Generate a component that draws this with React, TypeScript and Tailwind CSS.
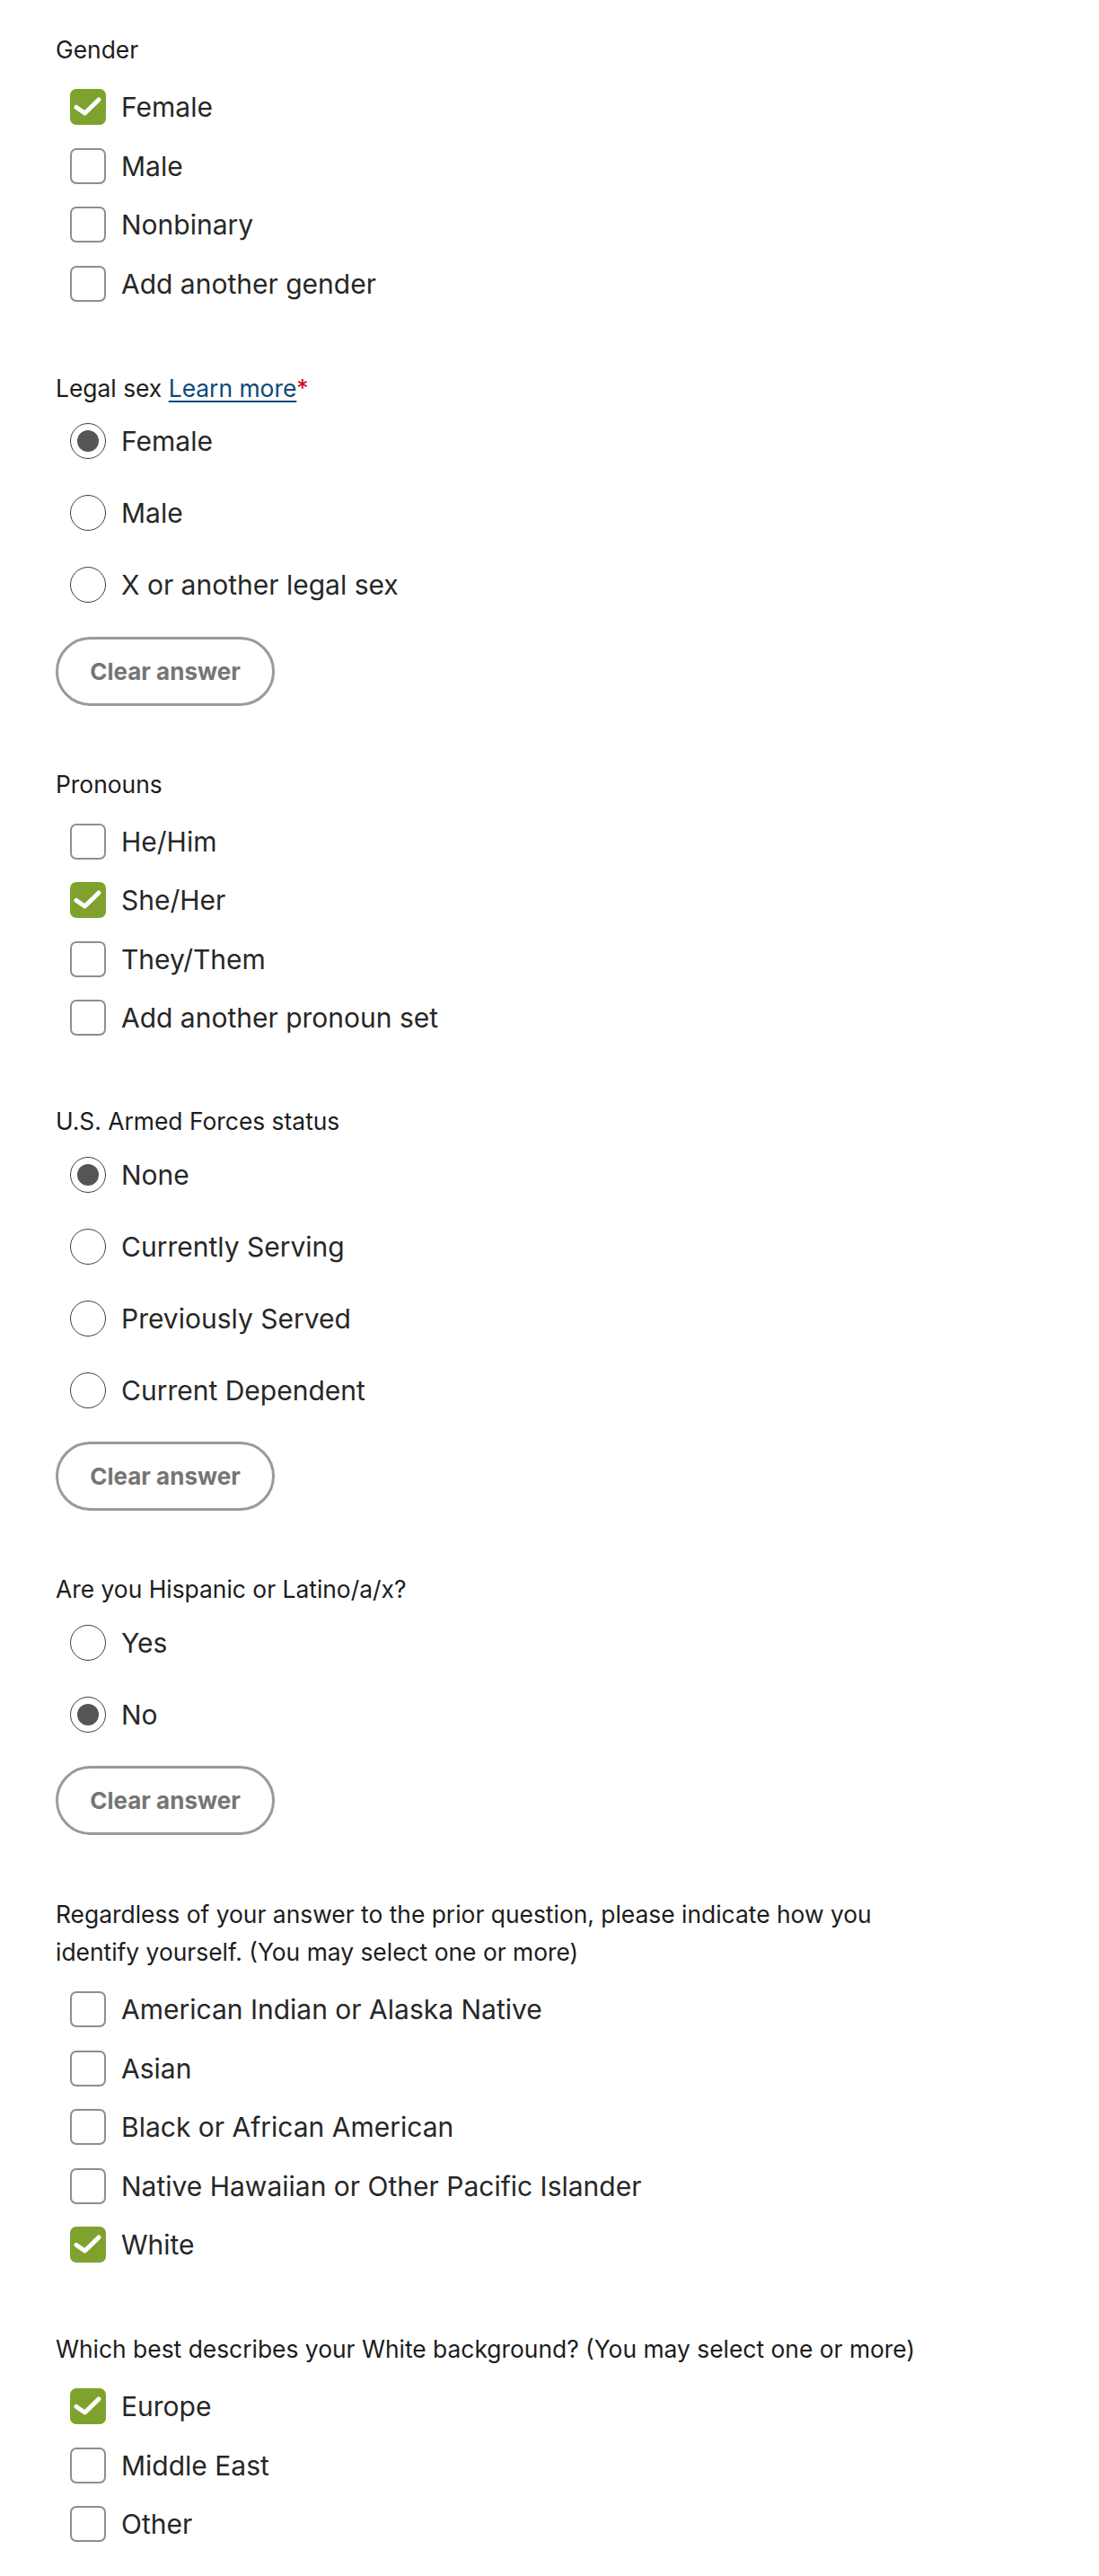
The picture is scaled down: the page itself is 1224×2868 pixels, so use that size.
import React from 'react';

type Opt = { label: string; checked?: boolean };

const font = { fontFamily: 'Inter, "Noto Sans", sans-serif' };

const CheckIcon: React.FC = () => (
  <svg className="h-[40px] w-[40px]" viewBox="0 0 40 40" fill="none">
    <path d="M7 20.5l9.5 6.5L32 12" stroke="#fff" strokeWidth={5} strokeLinecap="round" strokeLinejoin="round" />
  </svg>
);

const CheckRow: React.FC<Opt> = ({ label, checked }) => (
  <label className="flex h-[40px] items-center">
    {checked ? (
      <span className="flex h-[40px] w-[40px] shrink-0 items-center justify-center rounded-[7px] bg-[#7fa22e]">
        <CheckIcon />
      </span>
    ) : (
      <span className="h-[40px] w-[40px] shrink-0 rounded-[7px] border-2 border-[#8e8e8e] bg-white" />
    )}
    <span className="ml-[17px] text-[30px] leading-[40px] text-[#272727]">{label}</span>
  </label>
);

const RadioRow: React.FC<Opt> = ({ label, checked }) => (
  <label className="flex h-[40px] items-center">
    <span className="flex h-[40px] w-[40px] shrink-0 items-center justify-center rounded-full border-[1.5px] border-[#3f3f3f] bg-white">
      {checked && <span className="h-[24px] w-[24px] rounded-full bg-[#555555]" />}
    </span>
    <span className="ml-[17px] text-[30px] leading-[40px] text-[#272727]">{label}</span>
  </label>
);

const Label: React.FC<{ children: React.ReactNode; className?: string }> = ({ children, className }) => (
  <div className={`text-[26.4px] leading-[42px] text-[#1c1c1c] ${className ?? ''}`}>{children}</div>
);

const CheckGroup: React.FC<{ options: Opt[] }> = ({ options }) => (
  <div className="mt-[23px] flex flex-col gap-[25.5px] pl-[16px]">
    {options.map((o) => (
      <CheckRow key={o.label} {...o} />
    ))}
  </div>
);

const RadioGroup: React.FC<{ options: Opt[] }> = ({ options }) => (
  <div className="mt-[18.5px] flex flex-col gap-[40px] pl-[16px]">
    {options.map((o) => (
      <RadioRow key={o.label} {...o} />
    ))}
  </div>
);

const ClearButton: React.FC = () => (
  <button
    type="button"
    className="mt-[37.5px] flex h-[77px] w-[244px] items-center justify-center rounded-full border-[3px] border-[#9a9a9a] bg-white text-[26px] font-bold text-[#757575]"
  >
    Clear answer
  </button>
);

export default function App() {
  return (
    <div className="min-h-screen bg-white px-[62px] pt-[34px] pb-[40px]" style={font}>
      {/* Gender */}
      <Label>Gender</Label>
      <CheckGroup
        options={[
          { label: 'Female', checked: true },
          { label: 'Male' },
          { label: 'Nonbinary' },
          { label: 'Add another gender' },
        ]}
      />

      {/* Legal sex */}
      <Label className="mt-[75px]">
        Legal sex{' '}
        <a href="#" className="text-[#0b4a7a] underline decoration-[1.5px] underline-offset-[4px]">
          Learn more
        </a>
        <span className="text-[#d0021b]">*</span>
      </Label>
      <RadioGroup
        options={[{ label: 'Female', checked: true }, { label: 'Male' }, { label: 'X or another legal sex' }]}
      />
      <ClearButton />

      {/* Pronouns */}
      <Label className="mt-[66px]">Pronouns</Label>
      <CheckGroup
        options={[
          { label: 'He/Him' },
          { label: 'She/Her', checked: true },
          { label: 'They/Them' },
          { label: 'Add another pronoun set' },
        ]}
      />

      {/* Armed forces */}
      <Label className="mt-[74px]">U.S. Armed Forces status</Label>
      <RadioGroup
        options={[
          { label: 'None', checked: true },
          { label: 'Currently Serving' },
          { label: 'Previously Served' },
          { label: 'Current Dependent' },
        ]}
      />
      <ClearButton />

      {/* Hispanic */}
      <Label className="mt-[66px]">Are you Hispanic or Latino/a/x?</Label>
      <RadioGroup options={[{ label: 'Yes' }, { label: 'No', checked: true }]} />
      <ClearButton />

      {/* Race */}
      <Label className="mt-[67px] max-w-[960px]">
        Regardless of your answer to the prior question, please indicate how you identify yourself. (You may select
        one or more)
      </Label>
      <CheckGroup
        options={[
          { label: 'American Indian or Alaska Native' },
          { label: 'Asian' },
          { label: 'Black or African American' },
          { label: 'Native Hawaiian or Other Pacific Islander' },
          { label: 'White', checked: true },
        ]}
      />

      {/* White background */}
      <Label className="mt-[75px]">Which best describes your White background? (You may select one or more)</Label>
      <CheckGroup options={[{ label: 'Europe', checked: true }, { label: 'Middle East' }, { label: 'Other' }]} />
    </div>
  );
}
